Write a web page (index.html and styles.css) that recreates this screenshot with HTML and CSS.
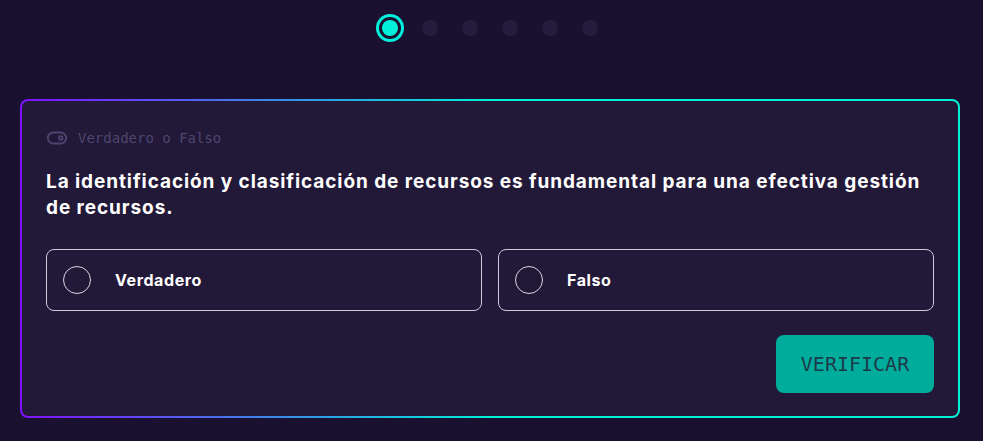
FILE: index.html
```html
<!DOCTYPE html>
<html lang="es">
<head>
<meta charset="utf-8">
<title>Quiz</title>
<link rel="stylesheet" href="styles.css">
</head>
<body>
<div class="steps">
  <div class="step"><span class="dot dot-active"></span></div>
  <div class="step"><span class="dot"></span></div>
  <div class="step"><span class="dot"></span></div>
  <div class="step"><span class="dot"></span></div>
  <div class="step"><span class="dot"></span></div>
  <div class="step"><span class="dot"></span></div>
</div>
<div class="card">
  <div class="kind">
    <svg class="kind-icon" width="22" height="22" viewBox="0 0 24 24" fill="none" stroke="currentColor" stroke-width="2" stroke-linecap="round" stroke-linejoin="round"><rect x="2" y="6" width="20" height="12" rx="6"/><circle cx="16" cy="12" r="2"/></svg>
    <span>Verdadero o Falso</span>
  </div>
  <h2 class="question">La identificación y clasificación de recursos es fundamental para una efectiva gestión de recursos.</h2>
  <div class="options">
    <button class="option"><span class="radio"></span><span class="option-text">Verdadero</span></button>
    <button class="option"><span class="radio"></span><span class="option-text">Falso</span></button>
  </div>
  <div class="actions">
    <button class="verify">VERIFICAR</button>
  </div>
</div>
</body>
</html>
```
FILE: styles.css
```css
html, body {
  margin: 0;
  padding: 0;
  background: #1a1030;
  height: 100%;
}
body {
  font-family: Inter, "Noto Sans", sans-serif;
  color: #fff;
}
.steps {
  display: flex;
  justify-content: center;
  width: 980px;
  padding-top: 14px;
  height: 28px;
}
.step {
  width: 40px;
  display: flex;
  align-items: center;
  justify-content: center;
}
.dot {
  width: 16px;
  height: 16px;
  border-radius: 50%;
  background: #251c3d;
}
.dot-active {
  width: 16px;
  height: 16px;
  background: #00f0dc;
  box-shadow: 0 0 0 3px #1a1030, 0 0 0 6px #00f0dc;
}
.card {
  margin: 57px 0 0 20px;
  width: 940px;
  box-sizing: border-box;
  border: 2px solid transparent;
  border-radius: 8px;
  background: linear-gradient(#221838, #221838) padding-box,
              linear-gradient(90deg, #8010ff 0%, #00f0d8 50%, #00f0d8 100%) border-box;
  padding: 27px 24px 23px;
}
.kind {
  display: flex;
  align-items: center;
  gap: 10px;
  height: 20px;
  color: #4d4670;
  font-family: "DejaVu Sans Mono", "Liberation Mono", monospace;
  font-size: 14px;
}
.question {
  margin: 21px 0 0;
  font-size: 19px;
  line-height: 26px;
  font-weight: 700;
  letter-spacing: 0.92px;
  color: #fff;
}
.options {
  display: grid;
  grid-template-columns: 1fr 1fr;
  gap: 16px;
  margin-top: 28px;
}
.option {
  display: flex;
  align-items: center;
  height: 62px;
  box-sizing: border-box;
  border: 1px solid #cfcad9;
  border-radius: 8px;
  background: transparent;
  padding: 0 16px;
  color: #fff;
  font-family: Inter, "Noto Sans", sans-serif;
  font-size: 16px;
  font-weight: 700;
  letter-spacing: 0.6px;
  text-align: left;
}
.radio {
  width: 28px;
  height: 28px;
  box-sizing: border-box;
  border: 1.5px solid #dcd8e4;
  border-radius: 50%;
  flex: none;
}
.option-text {
  margin-left: 24px;
}
.actions {
  display: flex;
  justify-content: flex-end;
  margin-top: 24px;
}
.verify {
  width: 158px;
  height: 58px;
  border: 0;
  border-radius: 8px;
  background: #00ad9d;
  color: #1d3b4b;
  font-family: "DejaVu Sans Mono", "Liberation Mono", monospace;
  font-size: 20px;
}
```
